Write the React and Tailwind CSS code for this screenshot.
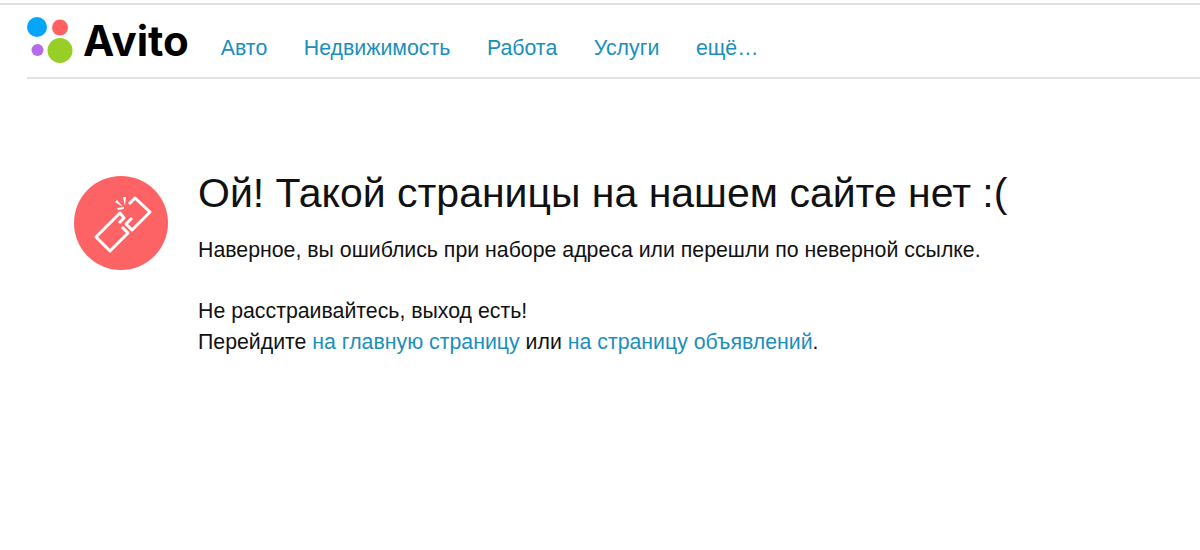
import React from 'react';

const navItems = ['Авто', 'Недвижимость', 'Работа', 'Услуги', 'ещё…'];

const Logo = () => (
  <div className="flex items-start">
    <svg width="56" height="46" viewBox="0 0 56 46" className="shrink-0">
      <circle cx="10" cy="10" r="10" fill="#04a5fb" />
      <circle cx="33" cy="10.5" r="8" fill="#ff6163" />
      <circle cx="10.5" cy="33" r="6" fill="#b66be8" />
      <circle cx="33" cy="33.5" r="12.5" fill="#97cf26" />
    </svg>
    <span className="mt-[2px] font-['Inter',sans-serif] text-[42px] leading-[44px] font-bold text-black">
      Avito
    </span>
  </div>
);

const BrokenLink = () => (
  <div className="flex h-[94px] w-[94px] shrink-0 items-center justify-center rounded-full bg-[#fd6265]">
    <svg width="94" height="94" viewBox="0 0 94 94" fill="none" stroke="#fff" strokeWidth="3" strokeLinejoin="round">
      {/* lower link */}
      <path d="M45 47 L50 42 L46 37 L22 61 L36 75 L54 57 L48 51" />
      {/* upper link */}
      <path d="M55 28 L61 22 L76 36 L58 54 L52 48 L58 42" />
      {/* sparks */}
      <path d="M49 21 L52 21 L51 30 Z M41 26 L43 24 L49 31 Z M43 32 L50 31 L50 33 L44 34 Z" fill="#fff" stroke="none" />
    </svg>
  </div>
);

export default function App() {
  return (
    <div className="h-[550px] w-[1200px] overflow-hidden bg-white font-['Liberation_Sans',Arial,sans-serif] text-[#111]">
      <div className="h-[5px] border-b-[2px] border-[#e0e0e0] pt-[2px]" />
      <header className="ml-[27px] flex h-[74px] items-start border-b-[2px] border-[#e2e2e2] pt-[12px]">
        <Logo />
        <nav className="ml-[32px] flex gap-[36.6px] pt-[20px] text-[21.3px] leading-[23px] text-[#1a8fbd]">
          {navItems.map((item) => (
            <a key={item} href="#">{item}</a>
          ))}
        </nav>
      </header>

      <main className="ml-[74px] flex gap-[30px] pt-[90px]">
        <div className="pt-[7px]">
          <BrokenLink />
        </div>
        <div>
          <h1 className="text-[41px] leading-[48px] font-normal">Ой! Такой страницы на нашем сайте нет :(</h1>
          <p className="mt-[18px] text-[21.3px] leading-[30px]">
            Наверное, вы ошиблись при наборе адреса или перешли по неверной ссылке.
          </p>
          <p className="mt-[31px] text-[21.3px] leading-[30.5px]">
            Не расстраивайтесь, выход есть!
            <br />
            Перейдите <a href="#" className="text-[#1a8fbd]">на главную страницу</a> или{' '}
            <a href="#" className="text-[#1a8fbd]">на страницу объявлений</a>.
          </p>
        </div>
      </main>
    </div>
  );
}
